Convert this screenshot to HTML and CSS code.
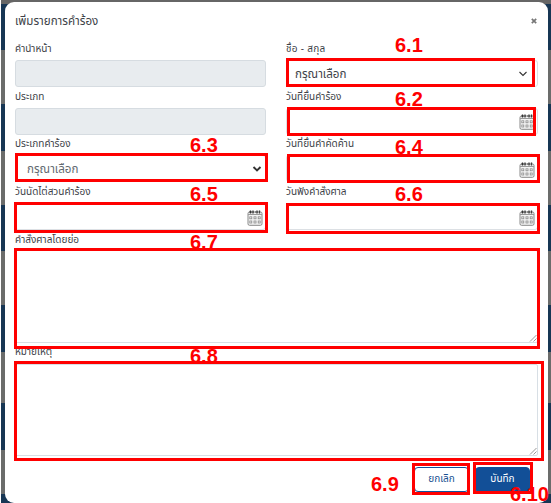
FILE: index.html
```html
<!DOCTYPE html>
<html lang="th">
<head>
<meta charset="utf-8">
<title>เพิ่มรายการคำร้อง</title>
<link rel="stylesheet" href="styles.css">
</head>
<body>
<svg class="defs" width="0" height="0"><defs>
<symbol id="cal" viewBox="0 0 16 16"><rect x="1" y="2" width="14" height="13.3" rx="1.5" fill="#f4f4f4" stroke="#888"/><path d="M1 4.5h14" stroke="#999"/><path d="M3.500 .5v3M6 .5v3M10 .5v3M12.500 .5v3" stroke="#333" stroke-width="1.300"/><path d="M2 2h12" stroke="#555" stroke-dasharray="1 1"/><g fill="#fff" stroke="#888" stroke-width=".8"><rect x="2.800" y="6.800" width="2" height="2"/><rect x="7" y="6.800" width="2" height="2"/><rect x="11.200" y="6.800" width="2" height="2"/><rect x="2.800" y="11" width="2" height="2"/><rect x="7" y="11" width="2" height="2"/><rect x="11.200" y="11" width="2" height="2"/></g></symbol>
<symbol id="chev" viewBox="0 0 10 8"><path d="M1.500 2L5 5.500L8.500 2" fill="none" stroke="currentColor"/></symbol>
<symbol id="grip" viewBox="0 0 8 8"><path d="M1 7.500L7.500 1M4.500 7.500L7.500 4.500" stroke="#999" fill="none"/></symbol>
</defs></svg>
<main class="modal">
  <header class="head"><h1>เพิ่มรายการคำร้อง</h1><svg class="close" viewBox="0 0 6 6"><path d="M.8 .8L5.200 5.200M5.200 .8L.8 5.200" stroke="#777" stroke-width="1.700"/></svg></header>
  <form class="grid">
    <div class="field"><label>คำนำหน้า</label><div class="input off"></div></div>
    <div class="field"><label class="loose">ชื่อ - สกุล</label><div class="input select near"><span>กรุณาเลือก</span><svg class="chev"><use href="#chev"/></svg></div></div>
    <div class="field"><label>ประเภท</label><div class="input off"></div></div>
    <div class="field"><label>วันที่ยื่นคำร้อง</label><div class="input"><svg class="cal"><use href="#cal"/></svg></div></div>
    <div class="field"><label>ประเภทคำร้อง</label><div class="input select bold"><span>กรุณาเลือก</span><svg class="chev"><use href="#chev"/></svg></div></div>
    <div class="field"><label>วันที่ยื่นคำคัดค้าน</label><div class="input"><svg class="cal"><use href="#cal"/></svg></div></div>
    <div class="field"><label>วันนัดไต่สวนคำร้อง</label><div class="input"><svg class="cal"><use href="#cal"/></svg></div></div>
    <div class="field"><label>วันฟังคำสั่งศาล</label><div class="input"><svg class="cal"><use href="#cal"/></svg></div></div>
    <div class="field wide"><label>คำสั่งศาลโดยย่อ</label><div class="area"><svg class="grip"><use href="#grip"/></svg></div></div>
    <div class="field wide last"><label>หมายเหตุ</label><div class="area"><svg class="grip"><use href="#grip"/></svg></div></div>
  </form>
  <footer class="actions"><button class="btn">ยกเลิก</button><button class="btn save">บันทึก</button></footer>
</main>
<div class="box b1"></div><div class="box b2"></div><div class="box b3"></div><div class="box b4"></div><div class="box b5"></div><div class="box b6"></div><div class="box b7"></div><div class="box b8"></div><div class="box b9"></div><div class="box b10"></div>
<b class="num n1">6.1</b><b class="num n2">6.2</b><b class="num n3">6.3</b><b class="num n4">6.4</b><b class="num n5">6.5</b><b class="num n6">6.6</b><b class="num n7">6.7</b><b class="num n8">6.8</b><b class="num n9">6.9</b><b class="num n10">6.10</b>
</body>
</html>
```
FILE: styles.css
```css
* { box-sizing: border-box; }
body {
  margin: 0; width: 551px; height: 503px; overflow: hidden; position: relative;
  padding: 2px 3px 0 5px;
  font-family: "Noto Sans Thai", "Noto Sans", sans-serif; color: #3d4248;
  background: linear-gradient(#fff, #fff) 0 0 / 1px 100% no-repeat,
    linear-gradient(#666 4px, #173654 4px 50px, #6b6c6b 50px 104px, #173654 104px 151px, #6b6c6b 151px 205px, #173654 205px 251px, #6b6c6b 251px 305px, #173654 305px 352px, #6b6c6b 352px 403px, #173654 403px 450px, #6b6c6b 450px 494px, #173654 494px);
}
.defs { position: absolute; }
.modal { height: 501px; background: #fff; border-radius: 9px; padding: 0 10px; }
.head { height: 40px; display: flex; align-items: center; justify-content: space-between; }
h1 { font-size: 11.6px; font-weight: 400; margin: 0; line-height: 18px; }
.close { width: 6px; height: 6px; margin: 0 1px 2px 0; }
.grid { display: grid; grid-template-columns: 251px 252px; column-gap: 20px; grid-template-rows: repeat(4, 47.7px) 110px 113px; }
.field { display: flex; flex-direction: column; }
.wide { grid-column: 1 / 3; }
.wide.last { padding-top: 3px; }
label { height: 18px; line-height: 14px; font-size: 10px; white-space: nowrap; }
.last label { line-height: 13px; }
.loose { letter-spacing: .3px; }
.input { height: 27px; border: 1px solid #dce0e4; border-radius: 3px; display: flex; align-items: center; justify-content: flex-end; padding-right: 2px; }
.off { background: #e8ecef; border-color: #d6dce1; }
.select { justify-content: space-between; padding: 0 9px 0 8px; font-size: 11.6px; line-height: 20px; }
.select span { padding-top: 2px; }
.bold { padding: 0 3px 0 11px; color: #626970; }
.chev { width: 10px; height: 8px; color: #333; stroke-width: 1.1; }
.bold .chev { stroke-width: 1.9; }
.cal { width: 16px; height: 16px; margin-top: 2px; }
.area { flex: none; height: 93px; width: 523px; border: 1px solid #d8dfe5; border-radius: 2px; display: flex; align-items: flex-end; justify-content: flex-end; }
.last .area { height: 92px; }
.grip { width: 8px; height: 8px; }
.actions { display: flex; justify-content: flex-end; gap: 6px; padding: 11px 8px 0 0; }
.btn { width: 55px; height: 25px; border: 1px solid #12509a; border-radius: 4px; padding: 0; background: #fff; color: #174f91; font: 10px/20px "Noto Sans Thai", "Noto Sans", sans-serif; }
.save { background: #124f97; color: #fff; }
.box { position: absolute; border: 3px solid #f00; }
.b1 { left: 286px; top: 58px; width: 249px; height: 29px; }
.b2 { left: 287px; top: 107px; width: 249px; height: 29px; }
.b3 { left: 15px; top: 153px; width: 253px; height: 29px; }
.b4 { left: 287px; top: 154px; width: 253px; height: 29px; }
.b5 { left: 14px; top: 202px; width: 254px; height: 31px; }
.b6 { left: 286px; top: 203px; width: 254px; height: 31px; }
.b7 { left: 14px; top: 248px; width: 526px; height: 101px; }
.b8 { left: 14px; top: 361px; width: 530px; height: 100px; }
.b9 { left: 412px; top: 463px; width: 58px; height: 32px; }
.b10 { left: 473px; top: 462px; width: 60px; height: 32px; }
.num { position: absolute; font: bold 20px/20px "Liberation Sans", sans-serif; color: #f00; }
.n1 { left: 395px; top: 35px; }
.n2 { left: 395px; top: 89px; }
.n3 { left: 190px; top: 135px; }
.n4 { left: 395px; top: 137px; }
.n5 { left: 190px; top: 184px; }
.n6 { left: 395px; top: 184px; }
.n7 { left: 190px; top: 232px; }
.n8 { left: 190px; top: 346px; }
.n9 { left: 371px; top: 474px; }
.n10 { left: 510px; top: 485px; line-height: 18px; }
```
